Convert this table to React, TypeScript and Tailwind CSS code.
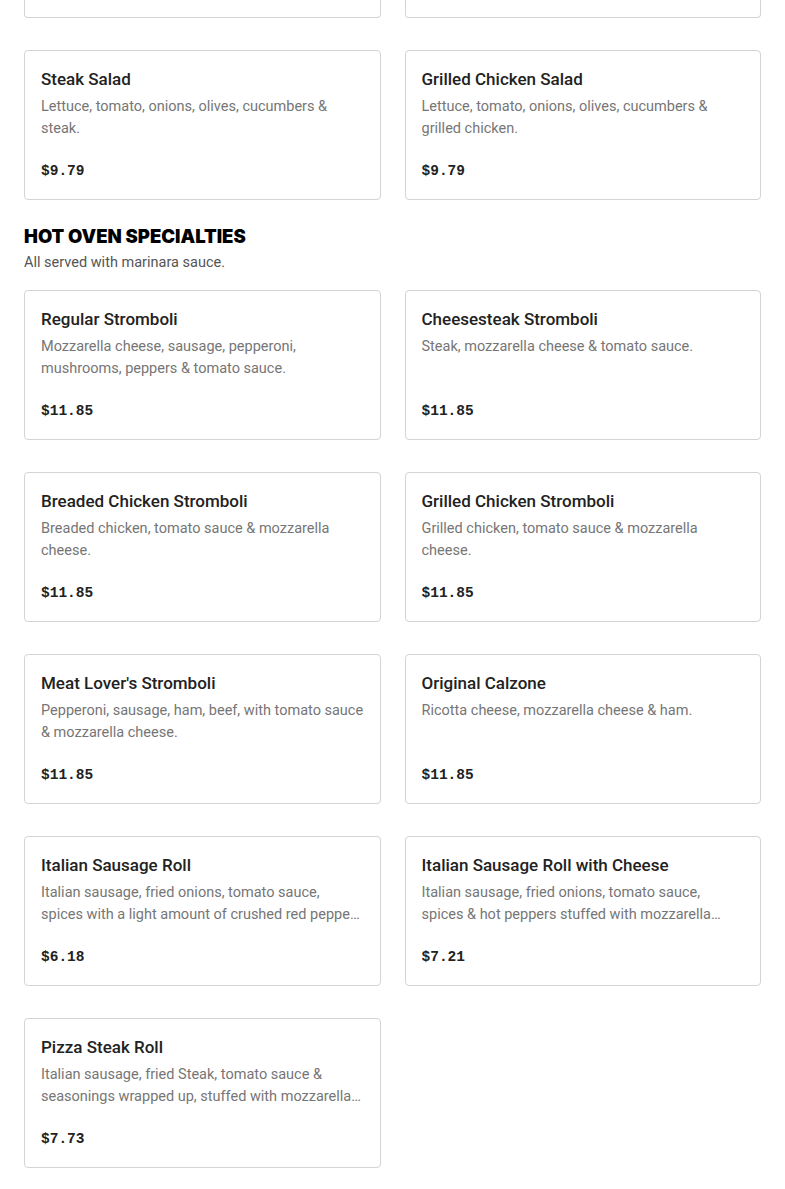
import React from "react";

type Item = { name: string; desc: string; price: string };

const salads: Item[] = [
  { name: "Steak Salad", desc: "Lettuce, tomato, onions, olives, cucumbers & steak.", price: "$9.79" },
  { name: "Grilled Chicken Salad", desc: "Lettuce, tomato, onions, olives, cucumbers & grilled chicken.", price: "$9.79" },
];

const hot: Item[] = [
  { name: "Regular Stromboli", desc: "Mozzarella cheese, sausage, pepperoni, mushrooms, peppers & tomato sauce.", price: "$11.85" },
  { name: "Cheesesteak Stromboli", desc: "Steak, mozzarella cheese & tomato sauce.", price: "$11.85" },
  { name: "Breaded Chicken Stromboli", desc: "Breaded chicken, tomato sauce & mozzarella cheese.", price: "$11.85" },
  { name: "Grilled Chicken Stromboli", desc: "Grilled chicken, tomato sauce & mozzarella cheese.", price: "$11.85" },
  { name: "Meat Lover's Stromboli", desc: "Pepperoni, sausage, ham, beef, with tomato sauce & mozzarella cheese.", price: "$11.85" },
  { name: "Original Calzone", desc: "Ricotta cheese, mozzarella cheese & ham.", price: "$11.85" },
  { name: "Italian Sausage Roll", desc: "Italian sausage, fried onions, tomato sauce, spices with a light amount of crushed red pepper and mozzarella cheese.", price: "$6.18" },
  { name: "Italian Sausage Roll with Cheese", desc: "Italian sausage, fried onions, tomato sauce, spices & hot peppers stuffed with mozzarella cheese.", price: "$7.21" },
  { name: "Pizza Steak Roll", desc: "Italian sausage, fried Steak, tomato sauce & seasonings wrapped up, stuffed with mozzarella cheese.", price: "$7.73" },
];

function Card({ item }: { item: Item }) {
  return (
    <div className="h-[150px] rounded border border-[#d4d4d4] bg-white px-4 pt-4 pb-4">
      <div className="text-[17px] leading-6 font-medium text-[#222] truncate">{item.name}</div>
      <div className="mt-[5px] h-[44px] text-[14.5px] leading-[22px] text-[#767676] line-clamp-2">{item.desc}</div>
      <div className="mt-[20px] text-[14.5px] leading-[22px] font-bold text-[#222]" style={{ fontFamily: '"Liberation Mono", "DejaVu Sans Mono", monospace' }}>
        {item.price}
      </div>
    </div>
  );
}

export default function App() {
  return (
    <div className="bg-white w-[785px] h-[1189px] overflow-hidden" style={{ fontFamily: 'Roboto, "Noto Sans", sans-serif' }}>
      <div className="px-6">
        <div className="grid grid-cols-2 gap-x-6 gap-y-8">
          <div className="h-[18px] rounded-b border border-t-0 border-[#d4d4d4] bg-white" />
          <div className="h-[18px] rounded-b border border-t-0 border-[#d4d4d4] bg-white" />
          {salads.map((it) => (
            <Card key={it.name} item={it} />
          ))}
        </div>
        <h2 className="mt-6 text-[18.5px] leading-6 font-black uppercase text-black" style={{ fontFamily: 'Inter, sans-serif' }}>Hot Oven Specialties</h2>
        <p className="mt-1 text-[14.5px] leading-[22px] text-[#555]">All served with marinara sauce.</p>
        <div className="mt-4 grid grid-cols-2 gap-x-6 gap-y-8">
          {hot.map((it) => (
            <Card key={it.name} item={it} />
          ))}
        </div>
      </div>
    </div>
  );
}
